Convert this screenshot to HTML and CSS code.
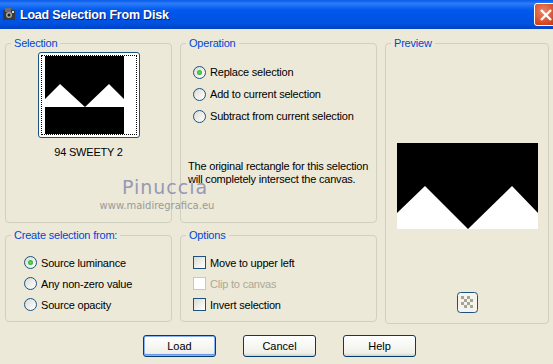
FILE: index.html
```html
<!DOCTYPE html>
<html lang="en">
  <head>
    <meta charset="UTF-8" />
    <title>Load Selection From Disk</title>
    <link rel="stylesheet" href="styles.css">
  </head>
  <body>
    <div class="titlebar">
      <svg class="app-icon" width="15" height="15" viewBox="0 0 15 15">
        <rect x="1" y="3" width="12" height="10" rx="1" fill="#3a3a3a" />
        <rect x="3" y="1" width="6" height="4" fill="#6b6b6b" />
        <circle cx="7" cy="8" r="3" fill="#a8a8a8" />
        <circle cx="7" cy="8" r="1.5" fill="#202020" />
        <rect x="10" y="4" width="2" height="2" fill="#d8d8d8" />
      </svg>
      <span class="title">Load Selection From Disk</span>
      <div class="close">
        <svg width="20" height="20" viewBox="0 0 20 20">
          <path d="M5 5 L15 15 M15 5 L5 15" stroke="#fff" stroke-width="2.4" />
        </svg>
      </div>
    </div>

    <div class="dialog">
      <div class="groups">
        <div class="group selection">
          <span class="legend">Selection</span>
          <div class="thumb">
            <div class="thumb-inner">
              <svg width="91" height="78" viewBox="0 0 91 78">
                <rect width="91" height="78" fill="#fff" />
                <rect width="79" height="78" fill="#000" />
                <polygon points="0,43 15,28 40,51 64,28 79,43 79,51 0,51" fill="#fff" />
              </svg>
            </div>
          </div>
          <div class="thumb-name">94 SWEETY 2</div>
        </div>

        <div class="group operation">
          <span class="legend">Operation</span>
          <div class="choices">
            <label class="row"><span class="radio on"></span>Replace selection</label>
            <label class="row"><span class="radio"></span>Add to current selection</label>
            <label class="row"><span class="radio"></span>Subtract from current selection</label>
          </div>
          <p class="note">The original rectangle for this selection will completely intersect the canvas.</p>
        </div>

        <div class="group preview">
          <span class="legend">Preview</span>
          <div class="preview-body">
            <svg width="141" height="86" viewBox="0 0 141 86">
              <rect width="141" height="86" fill="#000" />
              <polygon points="0,70 28,43 71,86 115,43 141,70 141,86 0,86" fill="#fff" />
            </svg>
          </div>
          <div class="checker">
            <svg width="21" height="21" viewBox="0 0 21 21">
              <rect x="0.5" y="0.5" width="20" height="20" rx="3" fill="#f4f3ee" stroke="#1c5180" />
              <g fill="#a8a494">
                <rect x="4" y="4" width="3" height="3" />
                <rect x="10" y="4" width="3" height="3" />
                <rect x="7" y="7" width="3" height="3" />
                <rect x="13" y="7" width="3" height="3" />
                <rect x="4" y="10" width="3" height="3" />
                <rect x="10" y="10" width="3" height="3" />
                <rect x="7" y="13" width="3" height="3" />
                <rect x="13" y="13" width="3" height="3" />
              </g>
            </svg>
          </div>
        </div>

        <div class="group create">
          <span class="legend">Create selection from:</span>
          <div class="choices">
            <label class="row"><span class="radio on"></span>Source luminance</label>
            <label class="row"><span class="radio"></span>Any non-zero value</label>
            <label class="row"><span class="radio"></span>Source opacity</label>
          </div>
        </div>

        <div class="group options">
          <span class="legend">Options</span>
          <div class="choices">
            <label class="row"><span class="check"></span>Move to upper left</label>
            <label class="row disabled"><span class="check"></span>Clip to canvas</label>
            <label class="row"><span class="check"></span>Invert selection</label>
          </div>
        </div>
      </div>

      <div class="buttons">
        <button type="button" class="default">Load</button>
        <button type="button">Cancel</button>
        <button type="button">Help</button>
      </div>

      <div class="watermark">
        <div class="wm-name">Pinuccia</div>
        <div class="wm-url">www.maidiregrafica.eu</div>
      </div>
    </div>
  </body>
</html>
```

FILE: styles.css
```css
body {
  margin: 0;
  width: 553px;
  height: 364px;
  overflow: hidden;
  background-color: #ece9d8;
  font-family: "Liberation Sans", Arial, sans-serif;
  font-size: 11px;
  letter-spacing: -0.2px;
  color: #000000;
}
.titlebar {
  height: 29px;
  display: flex;
  align-items: center;
  background: linear-gradient(#0a5ae8 0%, #2b7cf6 12%, #0058ee 35%, #0052e0 80%, #0043c6 100%);
  color: #ffffff;
}
.app-icon {
  margin-left: 2px;
  margin-right: 3px;
}
.title {
  font-size: 12.5px;
  font-weight: bold;
  letter-spacing: -0.2px;
  text-shadow: 1px 1px 0 #0a1e6e;
  flex: 1;
}
.close {
  width: 21px;
  height: 21px;
  flex-shrink: 0;
  margin-right: -4px;
  border: 1px solid #ffffff;
  border-radius: 3px;
  background: radial-gradient(circle at 40% 35%, #e9876a, #d6451f 70%, #b83412);
  display: flex;
  align-items: center;
  justify-content: center;
}
.dialog {
  position: relative;
  padding: 14px 4px 0 5px;
}
.groups {
  display: grid;
  grid-template-columns: 167px 197px 164px;
  grid-template-rows: 180px 87px;
  column-gap: 8px;
  row-gap: 12px;
}
.group {
  border: 1px solid #d0d0bf;
  border-radius: 4px;
  box-sizing: border-box;
  display: flex;
  flex-direction: column;
}
.legend {
  align-self: flex-start;
  margin: -8px 0 0 5px;
  padding: 0 3px;
  background-color: #ece9d8;
  color: #0046d5;
  line-height: 14px;
}
.preview {
  grid-column: 3;
  grid-row: 1 / span 2;
  height: 281px;
  align-items: center;
}
.selection {
  align-items: center;
}
.thumb {
  margin-top: 2px;
  width: 102px;
  height: 86px;
  box-sizing: border-box;
  border: 1px solid #1c5180;
  border-radius: 3px;
  background-color: #ffffff;
  padding: 2px;
}
.thumb-inner {
  border: 1px dotted #000000;
  height: 78px;
  padding: 0 0 0 3px;
  overflow: hidden;
}
.thumb-name {
  margin-top: 8px;
}
.choices {
  display: flex;
  flex-direction: column;
}
.operation .choices {
  padding: 11px 0 0 12px;
}
.operation .row {
  height: 22px;
}
.row {
  display: flex;
  align-items: center;
  height: 21px;
}
.radio {
  width: 11px;
  height: 11px;
  border: 1px solid #1c5180;
  border-radius: 50%;
  background: linear-gradient(135deg, #dcdcd4, #ffffff);
  margin-right: 4px;
  display: flex;
  align-items: center;
  justify-content: center;
}
.radio.on::after {
  content: "";
  width: 5px;
  height: 5px;
  border-radius: 50%;
  background: radial-gradient(#5fdc5f, #21a121);
}
.check {
  width: 11px;
  height: 11px;
  border: 1px solid #1c5180;
  background: linear-gradient(135deg, #dcdcd4, #ffffff);
  margin-right: 4px;
}
.disabled {
  color: #aca899;
}
.disabled .check {
  border-color: #cac8bb;
  background: #ffffff;
}
.note {
  margin: 33px 0 0 7px;
  line-height: 13px;
  width: 188px;
}
.create .choices {
  padding: 10px 0 0 18px;
}
.options .choices {
  padding: 10px 0 0 12px;
}
.preview-body {
  margin-top: 93px;
  height: 86px;
}
.checker {
  margin-top: 63px;
  height: 21px;
}
.buttons {
  display: flex;
  padding: 13px 0 0 138px;
  column-gap: 27px;
}
button {
  width: 73px;
  height: 22px;
  border: 1px solid #003c74;
  border-radius: 3px;
  background: linear-gradient(#ffffff, #f0f0ea 85%, #d6d0c5);
  font-family: "Liberation Sans", Arial, sans-serif;
  font-size: 11px;
  color: #000000;
  padding: 0;
}
button.default {
  box-shadow: inset 0 0 0 1px #8bb3f4, inset 0 -1px 0 1px #6f95e5;
}
.watermark {
  position: absolute;
  left: 97px;
  top: 147px;
  text-align: center;
  width: 134px;
  letter-spacing: 0;
}
.wm-name {
  font-family: "DejaVu Sans", sans-serif;
  font-size: 19px;
  color: #9898b6;
  letter-spacing: 1px;
  line-height: 23px;
  padding-left: 2px;
}
.wm-url {
  font-family: "DejaVu Sans", sans-serif;
  font-size: 10px;
  color: #9a9a9a;
  line-height: 12px;
  margin-top: 1px;
  padding-right: 14px;
}
```
